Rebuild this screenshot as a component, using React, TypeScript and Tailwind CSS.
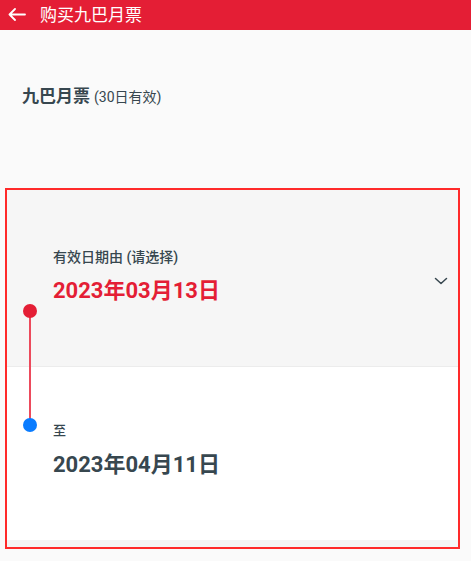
import React from 'react';

const font = { fontFamily: 'Roboto, "Noto Sans CJK SC", sans-serif' };

export default function App() {
  return (
    <div className="w-[471px] h-[561px] bg-[#fafafa] overflow-hidden" style={font}>
      {/* 顶栏 */}
      <div className="h-[30px] bg-[#e41e35] flex items-center">
        <svg width="18" height="14" viewBox="0 0 18 14" className="ml-[8px]" fill="none" stroke="white" strokeWidth="1.8" strokeLinecap="round" strokeLinejoin="round">
          <path d="M17 6.5H1.5M7 1L1.5 6.5L7 12" />
        </svg>
        <span className="ml-[14px] text-[17px] leading-none text-white">购买九巴月票</span>
      </div>

      <div className="pl-[22px] pt-[54px] h-[158px]">
        <span className="text-[17px] font-bold text-[#37474f]">九巴月票</span>
        <span className="text-[14px] text-[#37474f] ml-[4px]">(30日有效)</span>
      </div>

      {/* 日期选择 */}
      <div className="relative ml-[5px] w-[455px] h-[361px] border-2 border-[#ff2a2a] bg-[#f5f5f5]">
        <div className="h-[177px] bg-[#f6f6f6] flex items-start border-b border-[#ececec]">
          <div className="pl-[46px] pt-[57px] flex-1">
            <div className="text-[14px] leading-[20px] font-medium text-[#37474f]">有效日期由 (请选择)</div>
            <div className="mt-[9px] text-[22px] leading-[30px] font-bold text-[#e41e35]">2023年03月13日</div>
          </div>
          <svg width="14" height="8" viewBox="0 0 14 8" className="mt-[87px] mr-[10px]" fill="none" stroke="#37474f" strokeWidth="1.5" strokeLinecap="round" strokeLinejoin="round">
            <path d="M1.5 1.5L7 6.5L12.5 1.5" />
          </svg>
        </div>
        <div className="h-[173px] bg-white">
          <div className="pl-[46px] pt-[55px]">
            <div className="text-[13px] leading-[18px] font-medium text-[#37474f]">至</div>
            <div className="mt-[10px] text-[22px] leading-[30px] font-bold text-[#37474f]">2023年04月11日</div>
          </div>
        </div>

        {/* 时间线 */}
        <div className="absolute left-[22px] top-[121px] w-[2px] h-[114px] bg-[#ec4a5c]" />
        <div className="absolute left-[16px] top-[114px] w-[14px] h-[14px] rounded-full bg-[#e41e35]" />
        <div className="absolute left-[16px] top-[228px] w-[14px] h-[14px] rounded-full bg-[#0a7cff]" />
      </div>
    </div>
  );
}
